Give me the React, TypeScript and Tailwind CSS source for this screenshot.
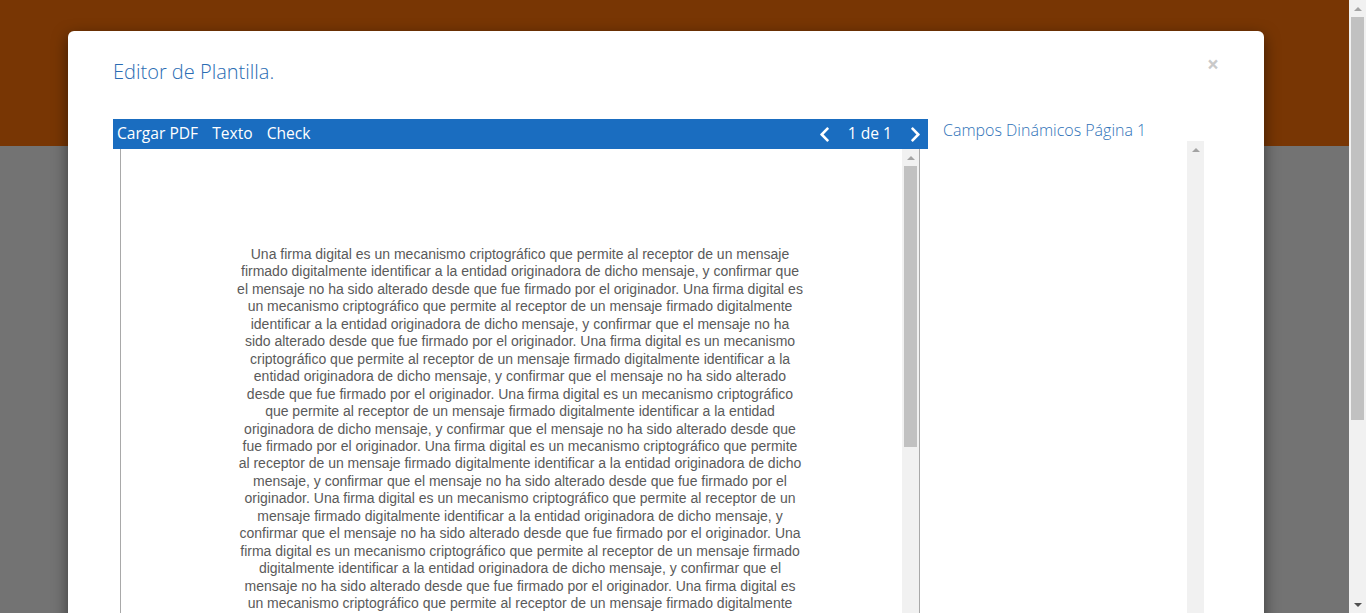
import React from "react";
import { FaChevronLeft, FaChevronRight } from "react-icons/fa";

const lines = [
  "Una firma digital es un mecanismo criptográfico que permite al receptor de un mensaje",
  "firmado digitalmente identificar a la entidad originadora de dicho mensaje, y confirmar que",
  "el mensaje no ha sido alterado desde que fue firmado por el originador. Una firma digital es",
  "un mecanismo criptográfico que permite al receptor de un mensaje firmado digitalmente",
  "identificar a la entidad originadora de dicho mensaje, y confirmar que el mensaje no ha",
  "sido alterado desde que fue firmado por el originador. Una firma digital es un mecanismo",
  "criptográfico que permite al receptor de un mensaje firmado digitalmente identificar a la",
  "entidad originadora de dicho mensaje, y confirmar que el mensaje no ha sido alterado",
  "desde que fue firmado por el originador. Una firma digital es un mecanismo criptográfico",
  "que permite al receptor de un mensaje firmado digitalmente identificar a la entidad",
  "originadora de dicho mensaje, y confirmar que el mensaje no ha sido alterado desde que",
  "fue firmado por el originador. Una firma digital es un mecanismo criptográfico que permite",
  "al receptor de un mensaje firmado digitalmente identificar a la entidad originadora de dicho",
  "mensaje, y confirmar que el mensaje no ha sido alterado desde que fue firmado por el",
  "originador. Una firma digital es un mecanismo criptográfico que permite al receptor de un",
  "mensaje firmado digitalmente identificar a la entidad originadora de dicho mensaje, y",
  "confirmar que el mensaje no ha sido alterado desde que fue firmado por el originador. Una",
  "firma digital es un mecanismo criptográfico que permite al receptor de un mensaje firmado",
  "digitalmente identificar a la entidad originadora de dicho mensaje, y confirmar que el",
  "mensaje no ha sido alterado desde que fue firmado por el originador. Una firma digital es",
  "un mecanismo criptográfico que permite al receptor de un mensaje firmado digitalmente",
  "identificar a la entidad originadora de dicho mensaje, y confirmar que el mensaje no ha",
  "sido alterado desde que fue firmado por el originador.",
];

function UpArrow() {
  return (
    <div className="flex h-[17px] items-center justify-center">
      <div className="h-0 w-0 border-x-[4px] border-b-[4px] border-x-transparent border-b-[#a3a3a3]" />
    </div>
  );
}
function DownArrow() {
  return (
    <div className="flex h-[17px] items-center justify-center">
      <div className="h-0 w-0 border-x-[4px] border-t-[4px] border-x-transparent border-t-[#505050]" />
    </div>
  );
}

export default function App() {
  return (
    <div
      className="flex h-[613px] w-[1366px] overflow-hidden"
      style={{ fontFamily: "'Open Sans', 'Liberation Sans', sans-serif" }}
    >
      <div className="relative flex-1 bg-[#737373]">
        <div className="h-[146px] bg-[#783604]" />
        <div className="absolute left-[68px] top-[31px] h-[700px] w-[1196px] rounded-[6px] bg-white pl-[45px] pr-[60px] pt-[27px] shadow-[0_5px_15px_rgba(0,0,0,0.5)]">
          <div className="absolute right-[45px] top-[23px] text-[21px] font-bold leading-[21px] text-[#c9c9c9]">
            ×
          </div>
          <div className="h-[28px] text-[20px] font-light leading-[28px] text-[#2a6cb3]">
            Editor de Plantilla.
          </div>
          <div className="mt-[33px] flex">
            <div className="w-[815px]">
              <div className="flex h-[30px] items-center bg-[#1a6dc0] pb-[3px] pl-[4px] pr-[4px] text-[15.6px] leading-[24px] text-white">
                <span>Cargar PDF</span>
                <span className="ml-[14px]">Texto</span>
                <span className="ml-[14px]">Check</span>
                <div className="ml-auto flex items-center pt-[3px]">
                  <FaChevronLeft size={17} />
                  <span className="-mt-[3px] ml-[15px] mr-[15px]">1 de 1</span>
                  <FaChevronRight size={17} />
                </div>
              </div>
              <div className="ml-[7px] flex h-[600px] w-[800px] border-x border-[#a9a9a9] bg-white">
                <div
                  className="flex-1 overflow-hidden pl-[17px] pt-[97px] text-center text-[14px] leading-[17.45px] text-[#5a5a5a]"
                  style={{ fontFamily: "'Liberation Sans', Arial, sans-serif" }}
                >
                  {lines.map((l, i) => (
                    <div key={i} className="whitespace-nowrap">
                      {l}
                    </div>
                  ))}
                </div>
                <div className="w-[17px] bg-[#f1f1f1]">
                  <UpArrow />
                  <div className="mx-[2px] h-[281px] bg-[#c1c1c1]" />
                </div>
              </div>
            </div>
            <div className="ml-[15px] flex-1">
              <div className="text-[16px] font-light leading-[22px] text-[#2f72b8]">
                Campos Dinámicos Página 1
              </div>
              <div className="flex h-[600px] justify-end">
                <div className="w-[17px] bg-[#f1f1f1]">
                  <UpArrow />
                </div>
              </div>
            </div>
          </div>
        </div>
      </div>
      <div className="flex w-[17px] flex-col bg-[#f1f1f1]">
        <UpArrow />
        <div className="mx-[2px] h-[403px] bg-[#c1c1c1]" />
        <div className="flex-1" />
        <DownArrow />
      </div>
    </div>
  );
}
